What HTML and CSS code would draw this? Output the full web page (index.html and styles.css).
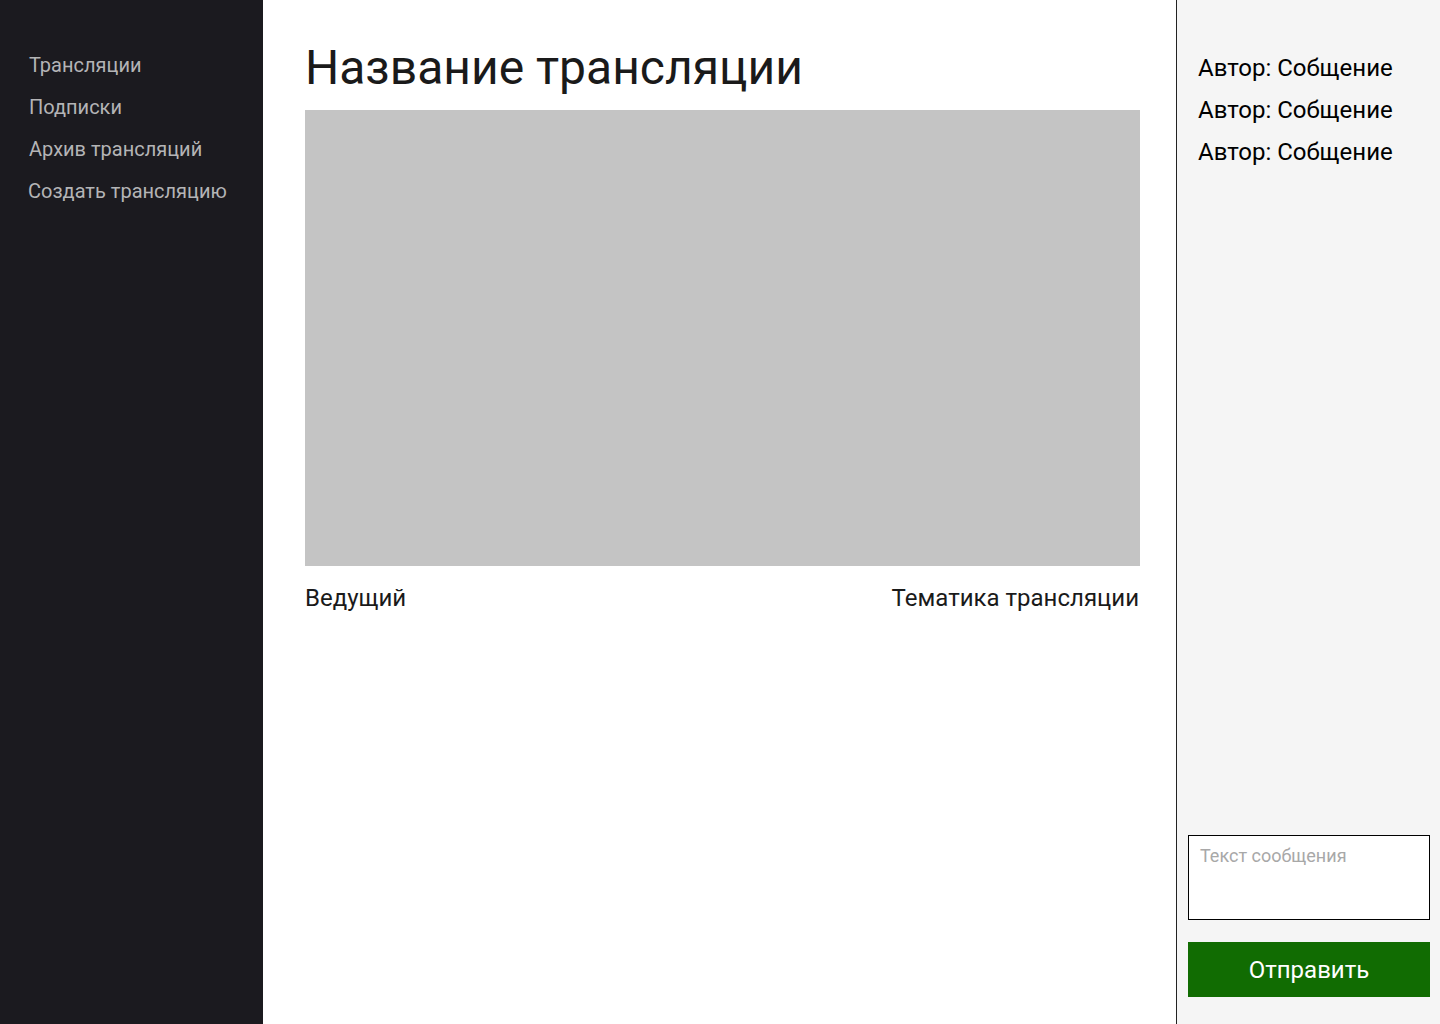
FILE: index.html
```html
<!DOCTYPE html>
<html lang="ru">
<head>
<meta charset="utf-8">
<title>Трансляция</title>
<link rel="stylesheet" href="styles.css">
</head>
<body>
<div class="app">
  <nav class="sidebar">
    <a class="nav-item" href="#">Трансляции</a>
    <a class="nav-item" href="#">Подписки</a>
    <a class="nav-item" href="#">Архив трансляций</a>
    <a class="nav-item nav-item--create" href="#">Создать трансляцию</a>
  </nav>
  <main class="main">
    <h1 class="title">Название трансляции</h1>
    <div class="video"></div>
    <div class="meta">
      <span>Ведущий</span>
      <span>Тематика трансляции</span>
    </div>
  </main>
  <aside class="chat">
    <div class="messages">
      <div class="message">Автор: Собщение</div>
      <div class="message">Автор: Собщение</div>
      <div class="message">Автор: Собщение</div>
    </div>
    <form class="chat-form">
      <textarea class="chat-input" placeholder="Текст сообщения"></textarea>
      <button class="send" type="button">Отправить</button>
    </form>
  </aside>
</div>
</body>
</html>
```
FILE: styles.css
```css
* { box-sizing: border-box; }
html, body { margin: 0; padding: 0; height: 100%; }
body { font-family: Roboto, "Noto Sans", sans-serif; color: #1a1a1a; background: #fff; }
.app { display: flex; height: 1024px; }
.sidebar {
  width: 263px; flex: none; background: #1b1a1f;
  display: flex; flex-direction: column; padding: 44px 0 0 29px;
}
.nav-item {
  color: #b4b4b6; text-decoration: none; font-size: 20px; line-height: 42px; height: 42px;
}
.nav-item--create { margin-left: -1px; }
.main { flex: 1; padding: 38px 36px 0 42px; }
.title { margin: 0; font-weight: 400; font-size: 48px; line-height: 60px; color: #1a1a1a; height: 72px; }
.video { height: 456px; background: #c4c4c4; }
.meta { display: flex; justify-content: space-between; font-size: 24px; line-height: 28px; margin-top: 18px; padding-right: 1px; color: #1a1a1a; }
.chat {
  width: 264px; flex: none; background: #f5f5f5; border-left: 1px solid #222;
  display: flex; flex-direction: column; padding: 47px 10px 27px 11px;
}
.messages { flex: 1; padding-left: 10px; }
.message { font-size: 24px; line-height: 42px; color: #000; }
.chat-form { display: flex; flex-direction: column; gap: 22px; }
.chat-input {
  width: 242px; height: 85px; border: 1px solid #000; background: #fff; resize: none;
  font-family: Roboto, sans-serif; font-size: 18px; padding: 9px 11px; margin: 0; outline: none;
}
.chat-input::placeholder { color: #a8a8a8; }
.send {
  width: 242px; height: 55px; border: none; background: #116c02; color: #fff;
  font-family: Roboto, sans-serif; font-size: 24px; margin: 0; padding: 0;
}
```
